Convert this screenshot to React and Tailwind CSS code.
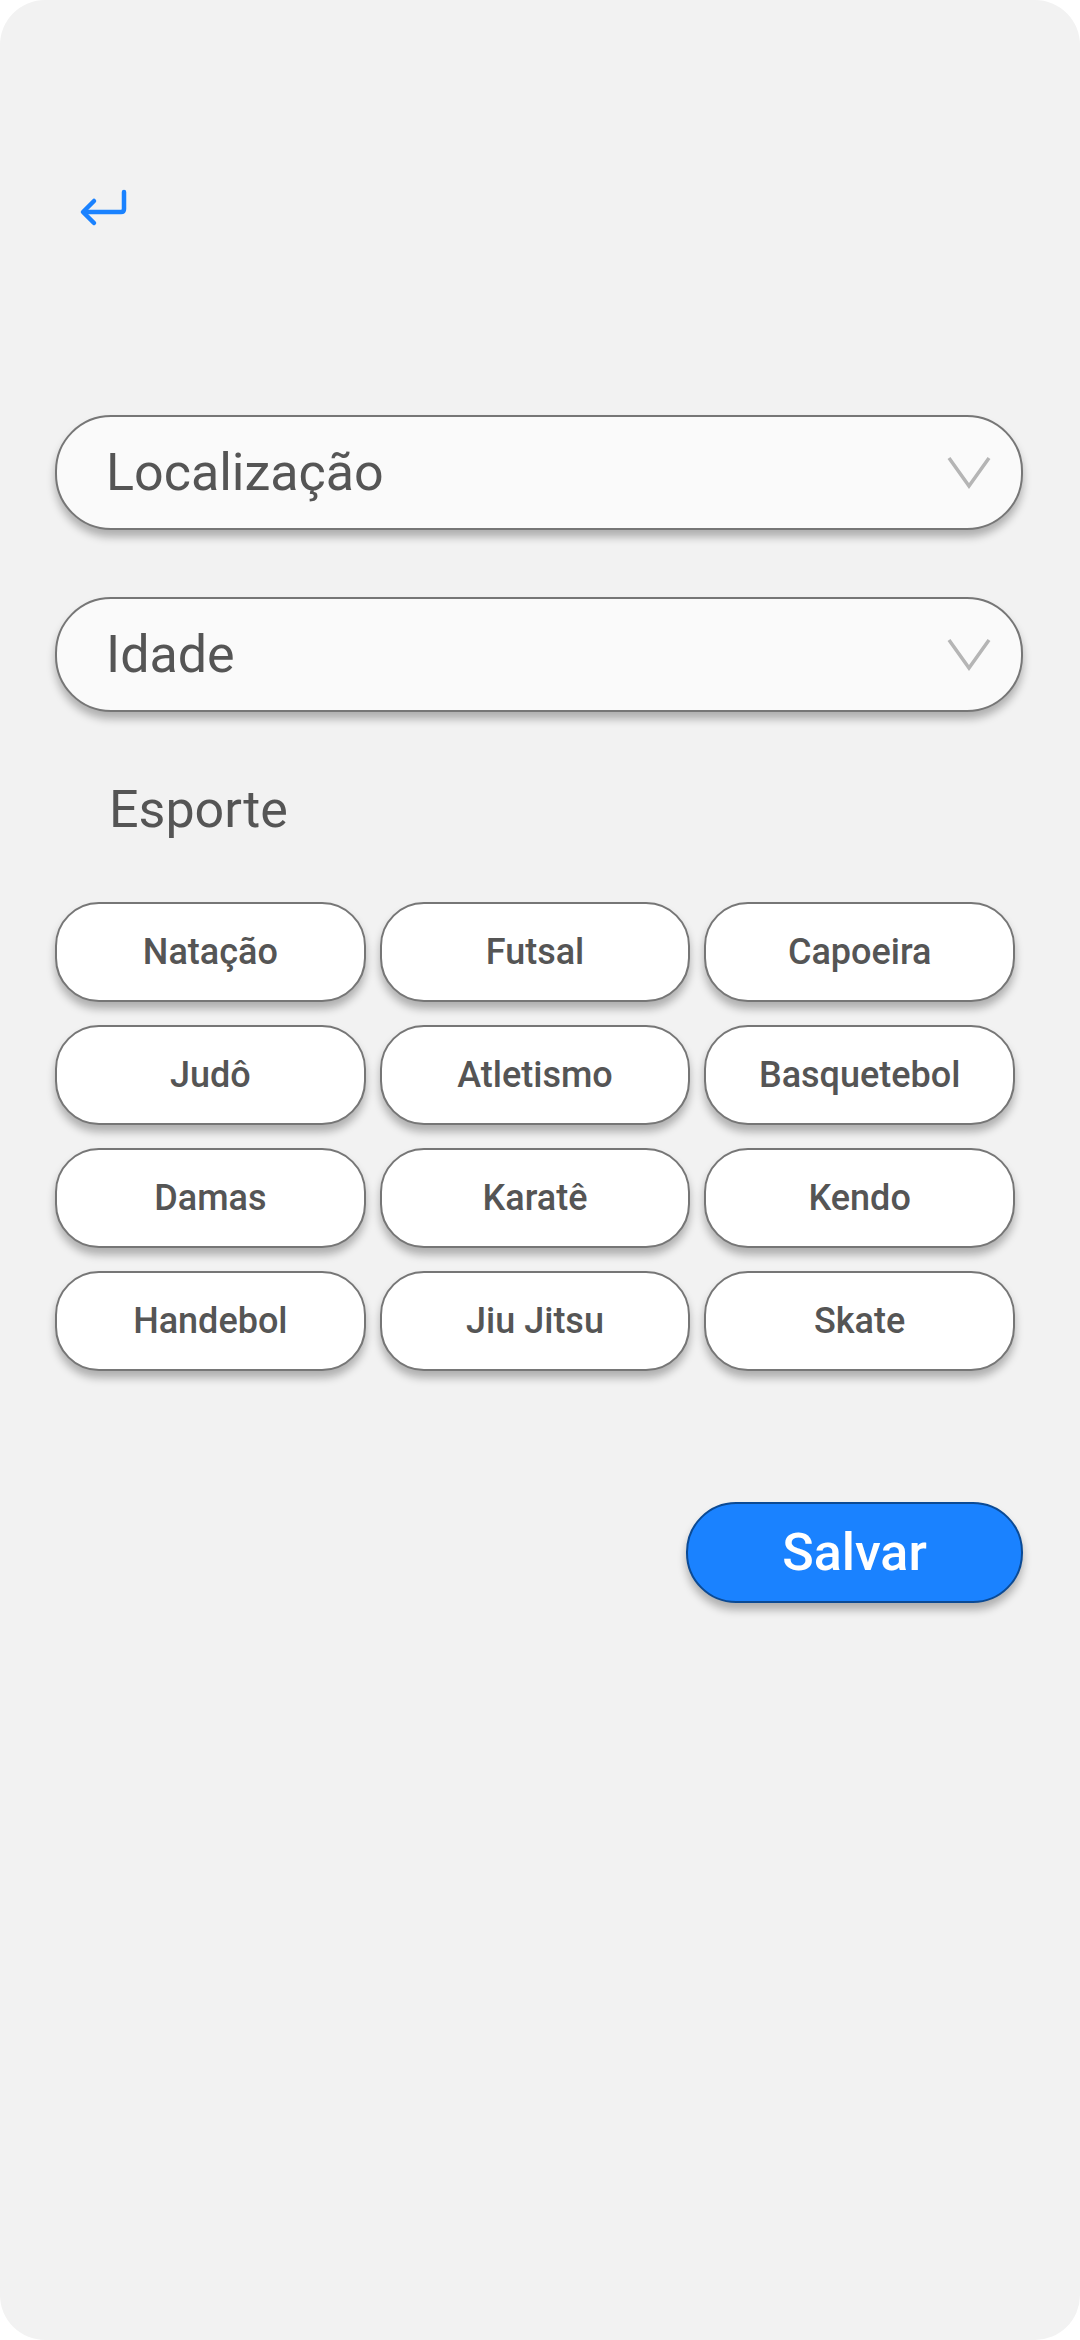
import React from 'react';

const sports = [
    "Natação", "Futsal", "Capoeira",
    "Judô", "Atletismo", "Basquetebol",
    "Damas", "Karatê", "Kendo",
    "Handebol", "Jiu Jitsu", "Skate",
];

const Select = ({ label, className = "" }) => (
    <div className={`flex items-center justify-between h-[115px] w-full rounded-[56px] border-2 border-[#767676] bg-[#fafafa] pl-[49px] pr-[29px] shadow-[0_7px_8px_rgba(0,0,0,0.28)] ${className}`}>
        <span className="text-[52px] leading-[52px] text-[#555555]">{label}</span>
        <svg width="46" height="33" viewBox="0 0 46 33" fill="none">
            <path d="M3 2 L23 30 L43 2" stroke="#b5b5b5" strokeWidth="3.5" strokeLinejoin="miter" />
        </svg>
    </div>
);

export default function App() {
    return (
        <div className="w-[1080px] h-[2340px] bg-white" style={{ fontFamily: "Roboto, 'Noto Sans', sans-serif" }}>
            <div className="h-full rounded-[45px] bg-[#f2f2f2] pl-[55px] pr-[57px] pt-[186px]">
                <svg className="block ml-[23px]" width="52" height="44" viewBox="78 186 52 44" fill="none">
                    <path d="M124 192 V209 Q124 212 121 212 H84" stroke="#1a82ff" strokeWidth="4.5" strokeLinecap="round" strokeLinejoin="round" />
                    <path d="M94 201 L83 212 L94 223" stroke="#1a82ff" strokeWidth="4.5" strokeLinecap="round" strokeLinejoin="round" />
                </svg>

                <Select label="Localização" className="mt-[185px]" />
                <Select label="Idade" className="mt-[67px]" />

                <div className="ml-[54px] mt-[72px] text-[52px] leading-[52px] text-[#555555]">Esporte</div>

                <div className="mt-[66px] grid w-[960px] grid-cols-3 gap-x-[14px] gap-y-[23px]">
                    {sports.map((s) => (
                        <button
                            key={s}
                            type="button"
                            className="flex h-[100px] items-center justify-center rounded-[44px] border-2 border-[#767676] bg-white text-[36px] font-medium text-[#555555] shadow-[0_7px_8px_rgba(0,0,0,0.28)]"
                        >
                            {s}
                        </button>
                    ))}
                </div>

                <div className="mt-[131px] flex justify-end">
                    <button
                        type="button"
                        className="flex h-[101px] w-[337px] items-center justify-center rounded-[50px] border-2 border-[#0b4a94] bg-[#1a82ff] text-[52px] font-medium text-white shadow-[0_7px_8px_rgba(0,0,0,0.28)]"
                    >
                        Salvar
                    </button>
                </div>
            </div>
        </div>
    );
}
